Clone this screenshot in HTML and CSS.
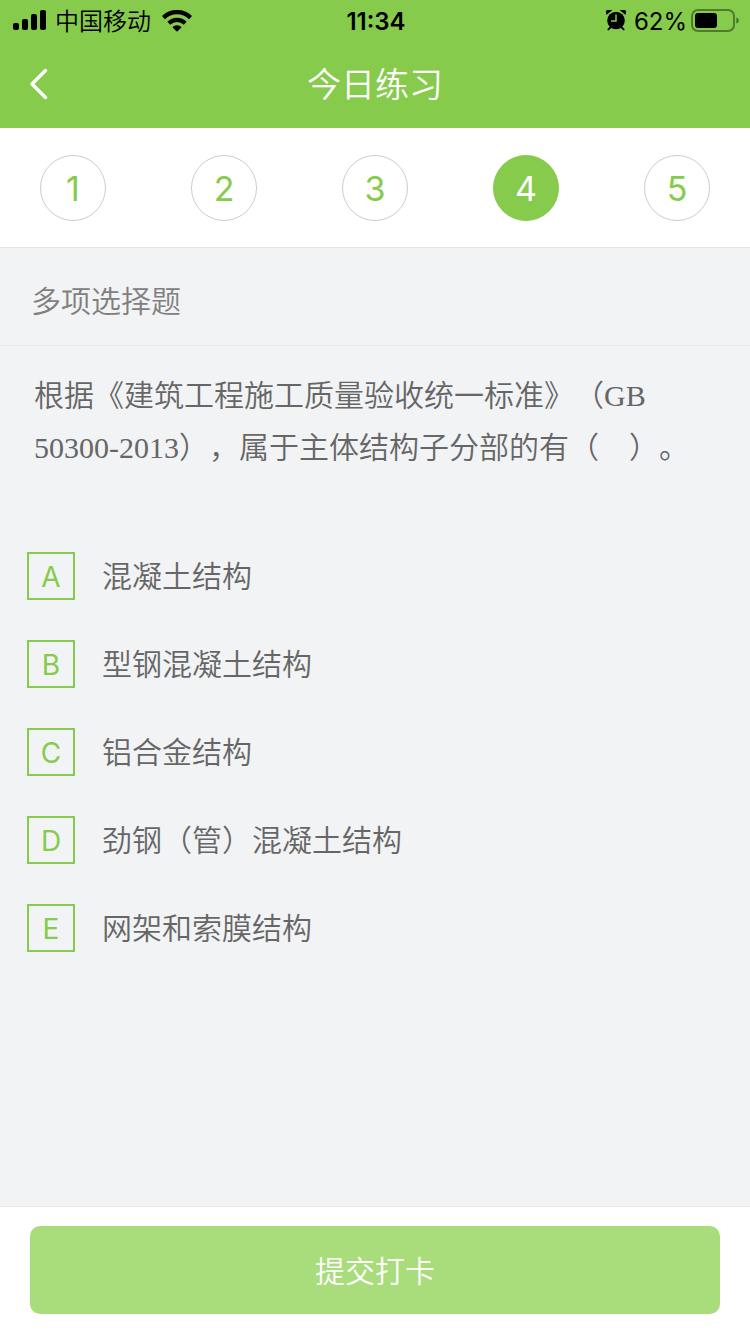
FILE: index.html
```
<!DOCTYPE html>
<html lang="zh-CN">
<head>
    <meta charset="UTF-8">
    <meta name="viewport" content="width=device-width, initial-scale=1.0">
    <title>今日练习</title>
    <link rel="stylesheet" href="styles.css">
</head>
<body>

    <header class="header">
        <div class="status">
            <div class="status-left">
                <svg class="icon-signal" width="34" height="22" viewBox="0 0 34 22">
                    <rect x="0" y="13" width="6" height="7" rx="2"/>
                    <rect x="9" y="9" width="6" height="11" rx="2"/>
                    <rect x="18" y="4" width="6" height="16" rx="2"/>
                    <rect x="27" y="0" width="6" height="20" rx="2"/>
                </svg>
                <span class="carrier">中国移动</span>
                <svg class="icon-wifi" width="30" height="22" viewBox="0 0 30 22">
                    <path d="M1.500 7.600a19.400 19.400 0 0 1 27 0" fill="none" stroke="#000" stroke-width="4.400"/>
                    <path d="M6.800 13.200a11.800 11.800 0 0 1 16.400 0" fill="none" stroke="#000" stroke-width="4.200"/>
                    <path d="M10.400 17.200a6.600 6.600 0 0 1 9.200 0L15 21.800z"/>
                </svg>
            </div>
            <span class="time">11:34</span>
            <div class="status-right">
                <svg class="icon-alarm" width="20" height="22" viewBox="0 0 20 22">
                    <circle cx="10" cy="10.500" r="8.800"/>
                    <path d="M.6 4.800A3.400 3.400 0 0 1 6 .4zM19.400 4.800A3.400 3.400 0 0 0 14 .4z"/>
                    <path d="M4.400 17.400l-2 2M15.600 17.400l2 2" stroke="#000" stroke-width="2" stroke-linecap="round"/>
                    <path d="M10 4.500v6.500H5" fill="none" stroke="#86cb4b" stroke-width="1.500"/>
                </svg>
                <span class="percent">62%</span>
                <svg class="icon-battery" width="48" height="24" viewBox="0 0 48 24">
                    <rect x="1" y="1" width="42" height="21" rx="6" fill="none" stroke="#000" stroke-opacity=".4" stroke-width="2"/>
                    <rect x="4" y="4" width="22" height="15" rx="3"/>
                    <path d="M45.400 8.500v6c1.600-.6 2.400-1.600 2.400-3s-.8-2.400-2.400-3z" fill-opacity=".45"/>
                </svg>
            </div>
        </div>
        <div class="navbar">
            <button class="btn-back" type="button" aria-label="返回">
                <svg width="20" height="32" viewBox="0 0 20 32">
                    <path d="M16.500 2.500L3 16l13.500 13.500" fill="none" stroke="#fff" stroke-width="3.500" stroke-linecap="round" stroke-linejoin="round"/>
                </svg>
            </button>
            <h1 class="title">今日练习</h1>
        </div>
    </header>

    <nav class="steps">
        <button class="step" type="button">1</button>
        <button class="step" type="button">2</button>
        <button class="step" type="button">3</button>
        <button class="step active" type="button">4</button>
        <button class="step" type="button">5</button>
    </nav>

    <main class="content">
        <h2 class="type">多项选择题</h2>
        <p class="question">根据《建筑工程施工质量验收统一标准》（GB 50300-2013），属于主体结构子分部的有（　）。</p>

        <div class="options">
            <label class="option">
                <span class="box"><input type="checkbox" name="answer" value="A"><span class="letter">A</span></span>
                <span>混凝土结构</span>
            </label>
            <label class="option">
                <span class="box"><input type="checkbox" name="answer" value="B"><span class="letter">B</span></span>
                <span>型钢混凝土结构</span>
            </label>
            <label class="option">
                <span class="box"><input type="checkbox" name="answer" value="C"><span class="letter">C</span></span>
                <span>铝合金结构</span>
            </label>
            <label class="option">
                <span class="box"><input type="checkbox" name="answer" value="D"><span class="letter">D</span></span>
                <span>劲钢（管）混凝土结构</span>
            </label>
            <label class="option">
                <span class="box"><input type="checkbox" name="answer" value="E"><span class="letter">E</span></span>
                <span>网架和索膜结构</span>
            </label>
        </div>
    </main>

    <footer class="footer">
        <button class="btn-submit" type="button">提交打卡</button>
    </footer>

</body>
</html>
```
FILE: styles.css
```
* {
    box-sizing: border-box;
}
body {
    margin: 0;
    min-height: 100vh;
    display: flex;
    flex-direction: column;
    background-color: #f2f3f5;
    color: #666;
    font-family: Inter, "Noto Sans CJK SC", sans-serif;
    font-size: 30px;
    font-weight: 350;
    text-spacing-trim: space-all;
}
button {
    margin: 0;
    padding: 0;
    border: 0;
    background: none;
    font: inherit;
    cursor: pointer;
}
svg {
    display: block;
}

/* header */
.header {
    background-color: #86cb4b;
}
.status {
    display: grid;
    grid-template-columns: 1fr auto 1fr;
    align-items: center;
    height: 40px;
    padding: 0 11px 0 13px;
    color: #000;
    font-size: 24px;
    line-height: 40px;
}
.status-left,
.status-right {
    display: flex;
    align-items: center;
}
.status-left {
    gap: 8px;
}
.carrier {
    padding-top: 2px;
}
.icon-wifi {
    margin-left: 3px;
}
.status-right {
    justify-content: flex-end;
    gap: 4px;
}
.icon-alarm {
    margin-right: 4px;
}
.percent,
.time {
    padding-top: 2px;
    font-weight: 400;
}
.time {
    font-weight: 600;
}
.navbar {
    display: grid;
    grid-template-columns: 60px 1fr 60px;
    align-items: center;
    height: 88px;
}
.btn-back {
    padding-left: 29px;
}
.title {
    margin: 0;
    padding-top: 2px;
    color: #fff;
    font-size: 34px;
    font-weight: 350;
    line-height: 86px;
    text-align: center;
}

/* question numbers */
.steps {
    display: flex;
    justify-content: space-between;
    padding: 27px 40px 26px;
    background-color: #fff;
    border-bottom: 1px solid #e6e6e6;
}
.step {
    width: 66px;
    height: 66px;
    border: 1px solid #ccc;
    border-radius: 50%;
    color: #86cb4b;
    font-size: 34px;
    font-weight: 400;
}
.step.active {
    border-color: #86cb4b;
    background-color: #86cb4b;
    color: #fff;
}

/* question */
.content {
    flex: 1;
}
.type {
    margin: 0;
    padding: 31px 31px 22px;
    border-bottom: 1px solid #e6e8ea;
    color: #808080;
    font-size: 30px;
    font-weight: 350;
    line-height: 44px;
}
.question {
    margin: 0;
    padding: 24px 34px;
    font-family: "Liberation Serif", "Noto Sans CJK SC", serif;
    line-height: 52px;
}
.options {
    display: flex;
    flex-direction: column;
    gap: 40px;
    padding: 54px 27px;
}
.option {
    display: flex;
    align-items: center;
    gap: 27px;
    line-height: 48px;
    cursor: pointer;
}
.box {
    display: grid;
    flex: none;
    width: 48px;
    height: 48px;
}
.box input,
.letter {
    grid-area: 1 / 1;
}
.box input {
    appearance: none;
    width: 48px;
    height: 48px;
    margin: 0;
    border: 2px solid #86cb4b;
}
.letter {
    padding-top: 1px;
    color: #86cb4b;
    font-size: 28px;
    font-weight: 400;
    text-align: center;
}
.box input:checked {
    background-color: #86cb4b;
}
.box input:checked + .letter {
    color: #fff;
}

/* submit */
.footer {
    padding: 19px 30px 20px;
    background-color: #fff;
    border-top: 1px solid #e6e8ea;
}
.btn-submit {
    display: block;
    width: 100%;
    height: 88px;
    padding-bottom: 2px;
    border-radius: 10px;
    background-color: #a9dc7a;
    color: #fff;
}
```
